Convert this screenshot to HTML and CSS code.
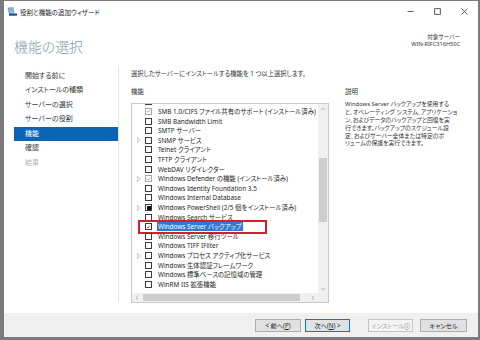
FILE: index.html
```html
<!DOCTYPE html>
<html lang="ja">
<head>
<meta charset="utf-8">
<title>役割と機能の追加ウィザード</title>
<link rel="stylesheet" href="styles.css">
</head>
<body>
<div class="window">
  <div class="titlebar">
    <svg class="appicon" viewBox="0 0 10 9" width="10" height="9">
      <path d="M1 1 L6 0.5 L7 6 L2 6.5 Z" fill="#9cc3e6" stroke="#4f86bd" stroke-width="0.6"/>
      <path d="M2 2.2 L5.6 1.9 M2.2 3.4 L5.8 3.1" stroke="#4f86bd" stroke-width="0.5"/>
      <rect x="2" y="6.5" width="8" height="2.2" fill="#1f4f8a"/>
    </svg>
    <span class="title">役割と機能の追加ウィザード</span>
    <div class="controls">
      <span class="ctl"><svg viewBox="0 0 7 7" width="7" height="7"><path d="M0.5 3.5 H6.5" stroke="#333" stroke-width="0.8"/></svg></span>
      <span class="ctl"><svg viewBox="0 0 7 7" width="7" height="7"><rect x="0.7" y="0.7" width="5.6" height="5.6" fill="none" stroke="#333" stroke-width="0.8"/></svg></span>
      <span class="ctl"><svg viewBox="0 0 7 7" width="7" height="7"><path d="M0.6 0.6 L6.4 6.4 M6.4 0.6 L0.6 6.4" stroke="#333" stroke-width="0.8"/></svg></span>
    </div>
  </div>

  <div class="header">
    <h1 class="page-title">機能の選択</h1>
    <div class="server">
      <div>対象サーバー</div>
      <div>WIN-RIFC316H50C</div>
    </div>
  </div>

  <div class="content">
    <nav class="nav">
      <div class="nav-item">開始する前に</div>
      <div class="nav-item">インストールの種類</div>
      <div class="nav-item">サーバーの選択</div>
      <div class="nav-item">サーバーの役割</div>
      <div class="nav-item active">機能</div>
      <div class="nav-item">確認</div>
      <div class="nav-item disabled">結果</div>
    </nav>

    <main class="main">
      <p class="intro">選択したサーバーにインストールする機能を 1 つ以上選択します。</p>
      <div class="cols">
        <section class="features">
          <div class="label">機能</div>
          <div class="listbox">
            <div class="viewport">
              <ul class="list">
                <li class="row"><span class="exp"></span><span class="cb"></span></li>
                <li class="row"><span class="exp"></span><span class="cb checked dis"><svg viewBox="0 0 7 7"><path d="M1.3 3.6 L2.9 5.1 L5.8 1.6" fill="none" stroke="#8a8a8a" stroke-width="0.9"/></svg></span><span class="txt">SMB 1.0/CIFS ファイル共有のサポート (インストール済み)</span></li>
                <li class="row"><span class="exp"></span><span class="cb"></span><span class="txt">SMB Bandwidth Limit</span></li>
                <li class="row"><span class="exp"></span><span class="cb"></span><span class="txt">SMTP サーバー</span></li>
                <li class="row"><span class="exp"><svg viewBox="0 0 4 6"><path d="M0.5 0.5 L3.5 3 L0.5 5.5 Z" fill="none" stroke="#a6a6a6" stroke-width="0.6"/></svg></span><span class="cb"></span><span class="txt">SNMP サービス</span></li>
                <li class="row"><span class="exp"></span><span class="cb"></span><span class="txt">Telnet クライアント</span></li>
                <li class="row"><span class="exp"></span><span class="cb"></span><span class="txt">TFTP クライアント</span></li>
                <li class="row"><span class="exp"></span><span class="cb"></span><span class="txt">WebDAV リダイレクター</span></li>
                <li class="row"><span class="exp"><svg viewBox="0 0 4 6"><path d="M0.5 0.5 L3.5 3 L0.5 5.5 Z" fill="none" stroke="#a6a6a6" stroke-width="0.6"/></svg></span><span class="cb checked dis"><svg viewBox="0 0 7 7"><path d="M1.3 3.6 L2.9 5.1 L5.8 1.6" fill="none" stroke="#8a8a8a" stroke-width="0.9"/></svg></span><span class="txt">Windows Defender の機能 (インストール済み)</span></li>
                <li class="row"><span class="exp"></span><span class="cb"></span><span class="txt">Windows Identity Foundation 3.5</span></li>
                <li class="row"><span class="exp"></span><span class="cb"></span><span class="txt">Windows Internal Database</span></li>
                <li class="row"><span class="exp"><svg viewBox="0 0 4 6"><path d="M0.5 0.5 L3.5 3 L0.5 5.5 Z" fill="none" stroke="#a6a6a6" stroke-width="0.6"/></svg></span><span class="cb partial"><span class="fill"></span></span><span class="txt">Windows PowerShell (2/5 個をインストール済み)</span></li>
                <li class="row"><span class="exp"></span><span class="cb"></span><span class="txt">Windows Search サービス</span></li>
                <li class="row selected"><span class="exp"></span><span class="cb checked"><svg viewBox="0 0 7 7"><path d="M1.3 3.6 L2.9 5.1 L5.8 1.6" fill="none" stroke="#111" stroke-width="0.9"/></svg></span><span class="txt sel">Windows Server バックアップ</span><span class="mark"></span></li>
                <li class="row"><span class="exp"></span><span class="cb"></span><span class="txt">Windows Server 移行ツール</span></li>
                <li class="row"><span class="exp"></span><span class="cb"></span><span class="txt">Windows TIFF IFilter</span></li>
                <li class="row"><span class="exp"><svg viewBox="0 0 4 6"><path d="M0.5 0.5 L3.5 3 L0.5 5.5 Z" fill="none" stroke="#a6a6a6" stroke-width="0.6"/></svg></span><span class="cb"></span><span class="txt">Windows プロセス アクティブ化サービス</span></li>
                <li class="row"><span class="exp"></span><span class="cb"></span><span class="txt">Windows 生体認証フレームワーク</span></li>
                <li class="row"><span class="exp"></span><span class="cb"></span><span class="txt">Windows 標準ベースの記憶域の管理</span></li>
                <li class="row"><span class="exp"></span><span class="cb"></span><span class="txt">WinRM IIS 拡張機能</span></li>
              </ul>
            </div>
            <div class="vscroll">
              <span class="arrow"><svg viewBox="0 0 6 4"><path d="M0.8 3.2 L3 1 L5.2 3.2" fill="none" stroke="#a0a0a0" stroke-width="0.7"/></svg></span>
              <div class="vtrack"><div class="vthumb"></div></div>
              <span class="arrow"><svg viewBox="0 0 6 4"><path d="M0.8 0.8 L3 3 L5.2 0.8" fill="none" stroke="#a0a0a0" stroke-width="0.7"/></svg></span>
            </div>
            <div class="hscroll">
              <span class="harrow"><svg viewBox="0 0 4 6"><path d="M3.2 0.8 L1 3 L3.2 5.2" fill="none" stroke="#a0a0a0" stroke-width="0.7"/></svg></span>
              <div class="htrack"><div class="hthumb"></div></div>
              <span class="harrow"><svg viewBox="0 0 4 6"><path d="M0.8 0.8 L3 3 L0.8 5.2" fill="none" stroke="#a0a0a0" stroke-width="0.7"/></svg></span>
            </div>
            <div class="corner"></div>
          </div>
        </section>
        <section class="desc">
          <div class="label">説明</div>
          <div class="desc-text">
            <div class="dl">Windows Server バックアップを使用する</div>
            <div class="dl">と、オペレーティング システム、アプリケーショ</div>
            <div class="dl">ン、およびデータのバックアップと回復を実</div>
            <div class="dl">行できます。バックアップのスケジュール設</div>
            <div class="dl">定、およびサーバー全体または特定のボ</div>
            <div class="dl">リュームの保護を実行できます。</div>
          </div>
        </section>
      </div>
    </main>
  </div>

  <div class="footer">
    <button class="btn">&lt; 前へ(<u>P</u>)</button>
    <button class="btn default">次へ(<u>N</u>) &gt;</button>
    <button class="btn disabled install">インストール(<u>I</u>)</button>
    <button class="btn cancel">キャンセル</button>
  </div>
</div>
</body>
</html>
```

FILE: styles.css
```css
* {
  box-sizing: border-box;
  margin: 0;
  padding: 0;
}

html, body {
  width: 480px;
  height: 340px;
  overflow: hidden;
  background: #ffffff;
}

body {
  font-family: "Noto Sans", "Noto Sans CJK JP", sans-serif;
  font-feature-settings: "palt";
  color: #333333;
}

.window {
  width: 480px;
  height: 340px;
  display: flex;
  flex-direction: column;
  border-style: solid;
  border-color: #7b7b7b;
  border-width: 1px 2px 3px 4px;
  background: #ffffff;
}

/* title bar */
.titlebar {
  height: 21px;
  flex: none;
  display: flex;
  align-items: center;
  padding-left: 3px;
}

.appicon {
  width: 10px;
  height: 9px;
  margin-right: 3px;
}

.title {
  font-size: 6.5px;
  color: #222222;
}

.controls {
  margin-left: auto;
  display: flex;
}

.ctl {
  width: 27px;
  height: 21px;
  display: flex;
  align-items: center;
  justify-content: center;
}

/* header */
.header {
  height: 42px;
  flex: none;
  display: flex;
  justify-content: space-between;
  padding: 0 18px 0 10px;
}

.page-title {
  font-family: "Noto Sans CJK JP", sans-serif;
  font-size: 13.9px;
  font-weight: 300;
  line-height: 18px;
  padding-top: 15px;
  color: #7d97ab;
}

.server {
  padding-top: 12px;
  font-size: 5.6px;
  line-height: 6.5px;
  text-align: right;
  color: #333333;
}

/* content */
.content {
  flex: 1;
  display: flex;
  min-height: 0;
}

.nav {
  width: 115px;
  flex: none;
  margin: 3px 0 11px 0;
  padding-top: 1.5px;
  border-right: 1px solid #e2e2e2;
}

.nav-item {
  height: 14.5px;
  line-height: 14.5px;
  margin-left: 10px;
  padding-left: 11px;
  font-size: 7px;
  color: #3a3a3a;
}

.nav-item.active {
  background: #0a66b5;
  color: #ffffff;
}

.nav-item.disabled {
  color: #b8b8b8;
}

.main {
  flex: 1;
  padding: 5px 13px 0 12px;
}

.intro {
  font-size: 6.3px;
  line-height: 10px;
  color: #333333;
}

.cols {
  display: flex;
  gap: 16px;
}

.label {
  margin-top: 8px;
  font-size: 6.5px;
  line-height: 10px;
  color: #333333;
}

.features {
  width: 198px;
  flex: none;
}

.listbox {
  margin-top: 6px;
  width: 198px;
  height: 200px;
  border: 1px solid #c9c9c9;
  display: grid;
  grid-template-columns: 1fr 10px;
  grid-template-rows: 1fr 9px;
}

.viewport {
  overflow: hidden;
  min-height: 0;
}

.list {
  list-style: none;
  margin-top: -7px;
}

.row {
  position: relative;
  height: 9.62px;
  display: flex;
  align-items: center;
  padding-left: 2px;
  white-space: nowrap;
  font-size: 6.4px;
  color: #1e1e1e;
}

.exp {
  width: 11px;
  flex: none;
  display: flex;
  align-items: center;
  padding-left: 3px;
}

.exp svg {
  width: 4px;
  height: 6px;
}

.cb {
  width: 7px;
  height: 7px;
  flex: none;
  margin-right: 6px;
  border: 0.8px solid #3c3c3c;
  background: #ffffff;
  display: flex;
  align-items: center;
  justify-content: center;
}

.cb svg {
  width: 6px;
  height: 6px;
}

.cb.dis {
  border-color: #a8a8a8;
}

.cb .fill {
  width: 4px;
  height: 4px;
  background: #111111;
}

.txt {
  line-height: 9px;
}

.txt.sel {
  background: #2d7bd4;
  color: #ffffff;
  padding: 0 1px;
  margin-left: -1px;
}

.mark {
  position: absolute;
  left: 6px;
  top: -2.2px;
  width: 129px;
  height: 14px;
  border: 2px solid #d3202c;
}

.vscroll {
  background: #f0f0f0;
  display: flex;
  flex-direction: column;
}

.arrow {
  height: 9px;
  flex: none;
  display: flex;
  align-items: center;
  justify-content: center;
}

.arrow svg {
  width: 6px;
  height: 4px;
}

.vtrack {
  flex: 1;
  padding: 0 1px;
}

.vthumb {
  margin-top: 45px;
  height: 64px;
  background: #cdcdcd;
}

.hscroll {
  background: #f0f0f0;
  display: flex;
}

.harrow {
  width: 10px;
  flex: none;
  display: flex;
  align-items: center;
  justify-content: center;
}

.harrow svg {
  width: 4px;
  height: 6px;
}

.htrack {
  flex: 1;
  padding: 1px 0;
}

.hthumb {
  margin-left: 1px;
  width: 157px;
  height: 100%;
  background: #cdcdcd;
}

.corner {
  background: #f0f0f0;
}

.desc {
  flex: 1;
  min-width: 0;
}

.desc-text {
  margin-top: 4px;
}

.dl {
  height: 7.9px;
  line-height: 7.9px;
  font-size: 5.85px;
  color: #333333;
  white-space: nowrap;
}

/* footer */
.footer {
  height: 24px;
  flex: none;
  background: #f0f0f0;
  display: flex;
  align-items: center;
  justify-content: flex-end;
  padding-right: 11px;
  gap: 4px;
}

.btn {
  height: 13px;
  width: 46px;
  font-family: inherit;
  font-feature-settings: "palt";
  font-size: 6.2px;
  color: #222222;
  background: #e1e1e1;
  border: 1px solid #adadad;
  display: flex;
  align-items: center;
  justify-content: center;
  white-space: nowrap;
}

.btn u {
  text-decoration-thickness: 0.5px;
  text-underline-offset: 1px;
}

.btn.default {
  width: 45px;
  border-color: #0078d7;
}

.btn.install {
  width: 45px;
  margin-left: 14px;
}

.btn.disabled {
  background: #f4f4f4;
  border-color: #c4c4c4;
  color: #a6a6a6;
}

.btn.cancel {
  width: 47px;
  margin-left: 3px;
}
```
